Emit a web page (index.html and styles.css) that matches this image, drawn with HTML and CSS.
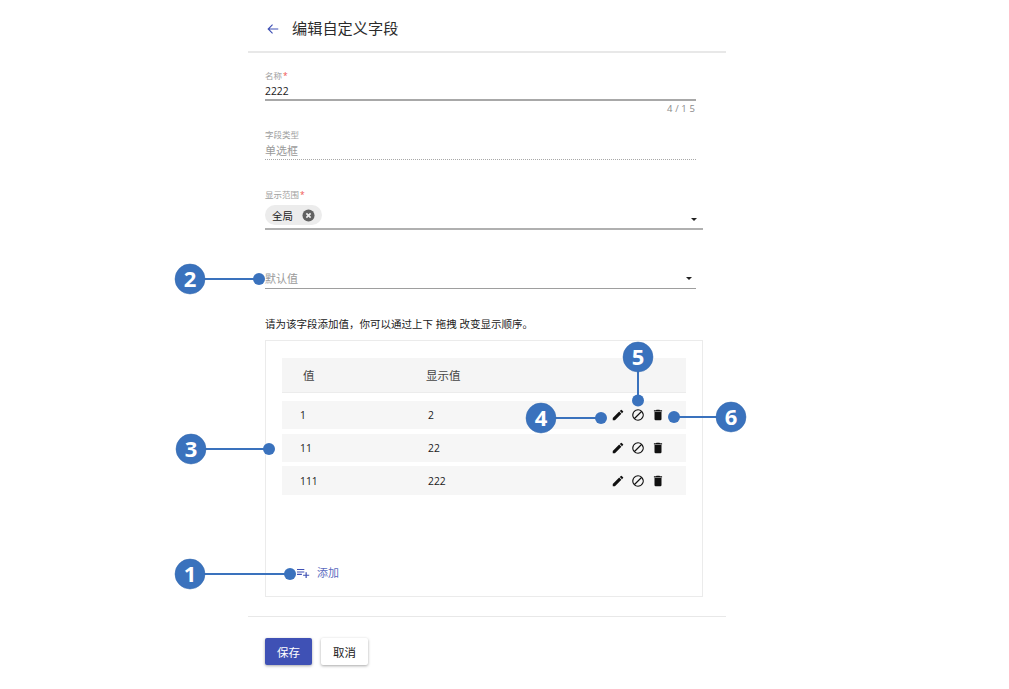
FILE: index.html
```html
<!DOCTYPE html>
<html lang="zh-CN">
<head>
<meta charset="utf-8">
<title>编辑自定义字段</title>
<link rel="stylesheet" href="styles.css">
</head>
<body>
<main class="page">
  <header class="head">
    <svg class="back" viewBox="0 0 16 16"><path d="M14 8H2.5M7.5 3 2.5 8l5 5"/></svg>
    <h1 class="title">编辑自定义字段</h1>
  </header>
  <section class="form">
    <div class="field field-name">
      <div class="label">名称<span class="req">*</span></div>
      <div class="value line-solid">2222</div>
      <div class="counter">4 / 1 5</div>
    </div>
    <div class="field field-type">
      <div class="label">字段类型</div>
      <div class="value muted line-dotted">单选框</div>
    </div>
    <div class="field field-scope">
      <div class="label">显示范围<span class="req">*</span></div>
      <div class="select scope-select">
        <span class="chip">全局
          <svg class="chip-x" viewBox="0 0 14 14"><circle cx="7" cy="7" r="6.5"/><path d="M4.7 4.7l4.6 4.6M9.3 4.7 4.7 9.3"/></svg>
        </span>
        <span class="caret caret-low"></span>
      </div>
    </div>
    <div class="field field-default">
      <div class="select default-select">
        <span class="muted">默认值</span>
        <span class="caret"></span>
      </div>
    </div>
    <p class="note">请为该字段添加值，你可以通过上下 拖拽 改变显示顺序。</p>
    <div class="box">
      <div class="thead"><span>值</span><span>显示值</span></div>
      <div class="rows">
        <div class="row">
          <span>1</span><span>2</span>
          <span class="actions">
            <svg class="ico" viewBox="0 0 24 24"><path d="M3 17.25V21h3.75L17.81 9.94l-3.75-3.75L3 17.25zM20.71 7.04a1 1 0 0 0 0-1.41l-2.34-2.34a1 1 0 0 0-1.41 0l-1.83 1.83 3.75 3.75 1.83-1.83z"/></svg>
            <svg class="ico" viewBox="0 0 24 24"><path d="M12 2a10 10 0 1 0 0 20 10 10 0 0 0 0-20zM4 12a8 8 0 0 1 12.9-6.31L5.69 16.9A7.9 7.9 0 0 1 4 12zm8 8a7.9 7.9 0 0 1-4.9-1.69L18.31 7.1A8 8 0 0 1 12 20z"/></svg>
            <svg class="ico" viewBox="0 0 24 24"><path d="M6 19a2 2 0 0 0 2 2h8a2 2 0 0 0 2-2V7H6v12zM19 4h-3.5l-1-1h-5l-1 1H5v2h14V4z"/></svg>
          </span>
        </div>
        <div class="row">
          <span>11</span><span>22</span>
          <span class="actions">
            <svg class="ico" viewBox="0 0 24 24"><path d="M3 17.25V21h3.75L17.81 9.94l-3.75-3.75L3 17.25zM20.71 7.04a1 1 0 0 0 0-1.41l-2.34-2.34a1 1 0 0 0-1.41 0l-1.83 1.83 3.75 3.75 1.83-1.83z"/></svg>
            <svg class="ico" viewBox="0 0 24 24"><path d="M12 2a10 10 0 1 0 0 20 10 10 0 0 0 0-20zM4 12a8 8 0 0 1 12.9-6.31L5.69 16.9A7.9 7.9 0 0 1 4 12zm8 8a7.9 7.9 0 0 1-4.9-1.69L18.31 7.1A8 8 0 0 1 12 20z"/></svg>
            <svg class="ico" viewBox="0 0 24 24"><path d="M6 19a2 2 0 0 0 2 2h8a2 2 0 0 0 2-2V7H6v12zM19 4h-3.5l-1-1h-5l-1 1H5v2h14V4z"/></svg>
          </span>
        </div>
        <div class="row">
          <span>111</span><span>222</span>
          <span class="actions">
            <svg class="ico" viewBox="0 0 24 24"><path d="M3 17.25V21h3.75L17.81 9.94l-3.75-3.75L3 17.25zM20.71 7.04a1 1 0 0 0 0-1.41l-2.34-2.34a1 1 0 0 0-1.41 0l-1.83 1.83 3.75 3.75 1.83-1.83z"/></svg>
            <svg class="ico" viewBox="0 0 24 24"><path d="M12 2a10 10 0 1 0 0 20 10 10 0 0 0 0-20zM4 12a8 8 0 0 1 12.9-6.31L5.69 16.9A7.9 7.9 0 0 1 4 12zm8 8a7.9 7.9 0 0 1-4.9-1.69L18.31 7.1A8 8 0 0 1 12 20z"/></svg>
            <svg class="ico" viewBox="0 0 24 24"><path d="M6 19a2 2 0 0 0 2 2h8a2 2 0 0 0 2-2V7H6v12zM19 4h-3.5l-1-1h-5l-1 1H5v2h14V4z"/></svg>
          </span>
        </div>
      </div>
      <div class="add">
        <svg class="add-ico" viewBox="0 0 16 12"><path d="M0 1h9v1.4H0zM0 4h9v1.4H0zM0 7h6v1.4H0zM10.500 5h1.500v3h3v1.500h-3v2.500h-1.500V9.500H7.500V8h3z"/></svg>
        <span>添加</span>
      </div>
    </div>
  </section>
  <div class="divider"></div>
  <div class="buttons">
    <button class="btn btn-primary" type="button">保存</button>
    <button class="btn btn-plain" type="button">取消</button>
  </div>
</main>
<svg class="callouts" viewBox="0 0 1009 689">
  <g class="c-line">
    <path d="M190 574H289"/><path d="M190 279H259"/><path d="M191 449H269"/>
    <path d="M541 418H601"/><path d="M638 357V400"/><path d="M731 417H674"/>
  </g>
  <g class="c-dot">
    <circle cx="290" cy="574" r="6"/><circle cx="259" cy="279" r="6"/><circle cx="269" cy="449" r="6"/>
    <circle cx="601" cy="418" r="6"/><circle cx="638" cy="400.500" r="6"/><circle cx="674" cy="417" r="6"/>
  </g>
  <g class="c-badge">
    <circle cx="190" cy="574" r="15"/><circle cx="190" cy="279" r="15"/><circle cx="191" cy="449" r="15"/>
    <circle cx="541" cy="418" r="15"/><circle cx="638" cy="357" r="15"/><circle cx="731" cy="417" r="15"/>
  </g>
  <g class="c-num">
    <text x="190" y="582">1</text><text x="190" y="287">2</text><text x="191" y="457">3</text>
    <text x="541" y="426">4</text><text x="638" y="365">5</text><text x="731" y="425">6</text>
  </g>
</svg>
</body>
</html>
```
FILE: styles.css
```css
* { box-sizing: border-box; }
html, body { margin: 0; height: 689px; overflow: hidden; background: #fff; }
body {
  position: relative;
  font-family: "Open Sans", "Noto Sans CJK SC", sans-serif;
  font-size: 10.5px;
  color: #212121;
}
.page { width: 478px; margin-left: 248px; }
.head {
  height: 53px;
  display: flex;
  align-items: center;
  padding: 6px 0 1px 18px;
  border-bottom: 2px solid #e8e8e8;
}
.back { width: 14px; height: 14px; margin: 2px 12px 0 0; fill: none; stroke: #3f51b5; stroke-width: 1.3; }
.title { margin: 0; font-size: 15.200px; font-weight: 400; line-height: 20px; color: #2b2b2b; }
.form { padding: 17px 0 0 17px; }
.field { display: flex; flex-direction: column; }
.label { height: 12px; font-size: 8.500px; line-height: 12px; color: #9e9e9e; }
.req { color: #ef5350; margin-left: 1px; }
.value { font-size: 10.300px; line-height: 17px; }
.muted { color: #9a9a9a; font-size: 11px; }
.line-solid { width: 431px; height: 19px; padding-top: 1px; border-bottom: 2px solid #a8a8a8; }
.line-dotted { width: 431px; height: 18px; margin-top: 1px; border-bottom: 1px dotted #a8a8a8; }
.counter {
  width: 430px;
  height: 12px;
  margin-top: 2px;
  text-align: right;
  font-size: 9.500px;
  line-height: 12px;
  letter-spacing: .1px;
  color: #8a8a8a;
}
.field-type { margin-top: 14px; }
.field-scope { margin-top: 29px; }
.select { display: flex; align-items: center; justify-content: space-between; }
.scope-select {
  width: 438px;
  height: 28px;
  padding: 3px 6px 0 0;
  margin-top: 1px;
  align-items: flex-start;
  border-bottom: 2px solid #b0b0b0;
}
.chip {
  display: flex;
  align-items: center;
  gap: 9px;
  height: 20px;
  width: 57px;
  padding-left: 7px;
  border-radius: 10px;
  background: #ececec;
  font-size: 10.500px;
}
.chip-x { width: 13px; height: 13px; }
.chip-x circle { fill: #616161; }
.chip-x path { stroke: #ececec; stroke-width: 1.8; fill: none; }
.caret {
  width: 0;
  height: 0;
  margin-right: 3px;
  border-left: 3.500px solid transparent;
  border-right: 3.500px solid transparent;
  border-top: 3.500px solid #212121;
}
.caret-low { margin: 13px 0 0; }
.field-default { margin-top: 40px; }
.default-select {
  width: 431px;
  height: 19px;
  padding: 0 1px 2px 0;
  border-bottom: 1px solid #9e9e9e;
}
.note { margin: 27px 0 0; height: 16px; line-height: 16px; font-size: 10.500px; color: #212121; }
.box {
  display: flex;
  flex-direction: column;
  width: 438px;
  height: 257px;
  margin-top: 8px;
  padding: 17px 16px 15px 16px;
  border: 1px solid #ebebeb;
}
.thead {
  display: grid;
  grid-template-columns: 123px 1fr;
  align-items: center;
  height: 35px;
  padding-left: 21px;
  background: #f5f5f5;
  border-bottom: 1px solid #ececec;
  font-size: 11.500px;
  color: #444;
}
.rows { display: flex; flex-direction: column; gap: 4.400px; margin-top: 7.800px; }
.row {
  display: grid;
  grid-template-columns: 128px 1fr auto;
  align-items: center;
  height: 28.400px;
  padding: 0 21px 0 18px;
  background: #f6f6f6;
  font-size: 10.300px;
}
.actions { display: flex; gap: 6px; }
.ico { width: 14px; height: 14px; fill: #111; }
.add {
  display: flex;
  align-items: center;
  gap: 7px;
  margin-top: auto;
  padding-left: 15px;
  color: #5c6bc0;
  font-size: 11px;
  line-height: 16px;
}
.add-ico { width: 13px; height: 10px; fill: #3f51b5; }
.divider { height: 1px; margin-top: 19px; background: #e8e8e8; }
.buttons { display: flex; gap: 9px; margin: 21px 0 0 17px; }
.btn {
  width: 47px;
  height: 27px;
  padding: 0;
  border: 0;
  border-radius: 2px;
  font: inherit;
  font-size: 11.500px;
  box-shadow: 0 1px 3px rgba(0, 0, 0, .35);
}
.btn-primary { background: #3f51b5; color: #fff; }
.btn-plain { background: #fff; color: #212121; }
.callouts { position: absolute; left: 0; top: 0; width: 1009px; height: 689px; pointer-events: none; }
.c-line path { stroke: #3a72bd; stroke-width: 2; fill: none; }
.c-dot circle { fill: #3a72bd; }
.c-badge circle { fill: #3a72bd; stroke: #3568ad; stroke-width: .5; }
.c-num text { fill: #fff; font-family: "Open Sans", sans-serif; font-weight: 700; font-size: 22px; text-anchor: middle; }
```
